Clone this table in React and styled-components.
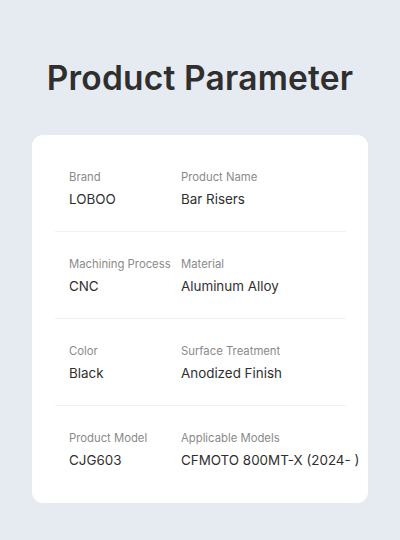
import React from "react";
import styled, { createGlobalStyle } from "styled-components";

const GlobalStyle = createGlobalStyle`
    body {
        margin: 0;
        background: #e6eaf1;
        font-family: "Inter", "Open Sans", sans-serif;
    }
`;

const Page = styled.div`
    width: 400px;
    height: 540px;
    display: flex;
    flex-direction: column;
    align-items: center;
    background: #e6eaf1;
`;

const Title = styled.h1`
    margin: 56px 0 0;
    height: 44px;
    line-height: 44px;
    font-size: 33.5px;
    font-weight: 600;
    letter-spacing: 0.2px;
    color: #2f2f2f;
`;

const Card = styled.div`
    margin-top: 35px;
    width: 336px;
    box-sizing: border-box;
    padding: 10px 22px 10px 23px;
    background: #ffffff;
    border-radius: 11px;
`;

const Row = styled.div`
    height: 87px;
    box-sizing: border-box;
    padding: 24px 0 0 14px;
    display: grid;
    grid-template-columns: 112px 1fr;
    border-bottom: ${(p) => (p.$last ? "none" : "1px solid #eef0f3")};
`;

const Cell = styled.div`
    display: flex;
    flex-direction: column;
    gap: 4px;
`;

const Label = styled.span`
    font-size: 11.3px;
    line-height: 16px;
    color: #8a8a8a;
    white-space: nowrap;
`;

const Value = styled.span`
    font-size: 13.4px;
    line-height: 20px;
    color: #2f2f2f;
    white-space: nowrap;
`;

const rows = [
    [["Brand", "LOBOO"], ["Product Name", "Bar Risers"]],
    [["Machining Process", "CNC"], ["Material", "Aluminum Alloy"]],
    [["Color", "Black"], ["Surface Treatment", "Anodized Finish"]],
    [["Product Model", "CJG603"], ["Applicable Models", "CFMOTO 800MT-X (2024- )"]],
];

export default function App() {
    return (
        <>
            <GlobalStyle />
            <Page>
                <Title>Product Parameter</Title>
                <Card>
                    {rows.map((row, i) => (
                        <Row key={i} $last={i === rows.length - 1}>
                            {row.map(([label, value]) => (
                                <Cell key={label}>
                                    <Label>{label}</Label>
                                    <Value>{value}</Value>
                                </Cell>
                            ))}
                        </Row>
                    ))}
                </Card>
            </Page>
        </>
    );
}
